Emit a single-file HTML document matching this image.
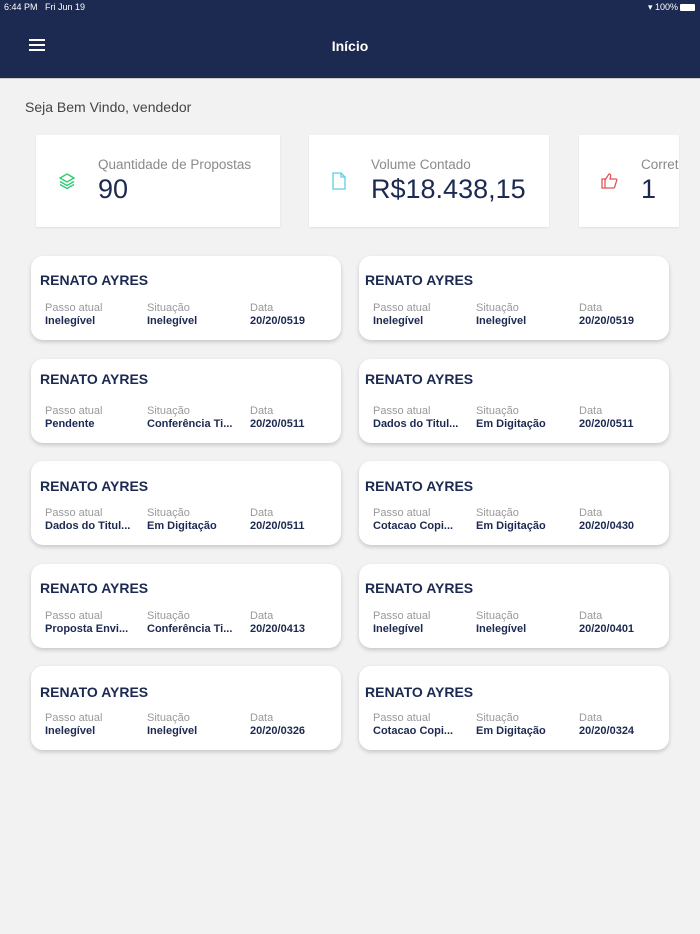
<!DOCTYPE html>
<html><head><meta charset="utf-8"><style>
*{margin:0;padding:0;box-sizing:border-box}
body{width:700px;height:934px;background:#f2f2f2;font-family:"Liberation Sans",sans-serif;position:relative;overflow:hidden}
.hdr{position:absolute;left:0;top:0;width:700px;height:78px;background:#1c2951;color:#fff}
.abs{position:absolute}
.stat{position:absolute;top:135px;height:92px;background:#fff;box-shadow:0 1px 2px rgba(0,0,0,.08)}
.stat .l{position:absolute;left:62px;top:22px;font-size:13.5px;color:#8a8a8a;white-space:nowrap}
.stat .v{position:absolute;left:62px;top:39px;font-size:27px;color:#1c2951;white-space:nowrap}
.card{position:absolute;width:310px;height:84px;background:#fff;border-radius:12px;box-shadow:0 2px 4px rgba(0,0,0,.18)}
.card .t{position:absolute;left:9px;top:16px;font-size:14px;color:#1c2951;font-weight:bold}
.card .c{position:absolute;top:46px;font-size:11px;color:#999;line-height:13px}
.card .c b{display:block;color:#1c2951;font-weight:bold;font-size:11px}
</style></head><body>
<div class="hdr">
<div class="abs" style="left:4px;top:2px;font-size:9px">6:44 PM&nbsp;&nbsp; Fri Jun 19</div>
<div class="abs" style="right:22px;top:2px;font-size:9px">&#9662; 100%</div>
<div class="abs" style="right:5px;top:4px;width:15px;height:7px;background:#fff;border-radius:1px"></div>
<div class="abs" style="left:29px;top:39px;width:16px;height:2px;background:#fff;box-shadow:0 5px 0 #fff,0 10px 0 #fff"></div>
<div class="abs" style="left:0;width:700px;top:38px;text-align:center;font-size:14px;font-weight:bold">Início</div>
</div>
<div class="abs" style="left:0;top:78px;width:700px;height:1px;background:#ccc"></div>
<div class="abs" style="left:25px;top:99px;font-size:14px;color:#444">Seja Bem Vindo, vendedor</div>

<div class="stat" style="left:36px;width:244px">
<svg class="abs" style="left:22px;top:37px" width="18" height="18" viewBox="0 0 18 18" fill="none" stroke="#2ecc71" stroke-width="1.4"><path d="M9 2L16 6 9 10 2 6Z"/><path d="M2 9.5L9 13.5 16 9.5"/><path d="M2 12.5L9 16.5 16 12.5"/></svg>
<div class="l">Quantidade de Propostas</div><div class="v">90</div></div>
<div class="stat" style="left:309px;width:240px">
<svg class="abs" style="left:22px;top:37px" width="16" height="18" viewBox="0 0 16 18" fill="none" stroke="#5bd0e6" stroke-width="1.3"><path d="M2 1H10L14 5V17H2Z"/><path d="M10 1V5H14"/></svg>
<div class="l">Volume Contado</div><div class="v">R$18.438,15</div></div>
<div class="stat" style="left:579px;width:100px;overflow:hidden">
<svg class="abs" style="left:22px;top:37px" width="17" height="17" viewBox="0 0 17 17" fill="none" stroke="#e05555" stroke-width="1.3"><path d="M1 7H4V16H1Z"/><path d="M4 8L8 2C9.5 2 10 3 9.5 5L9 7H15C16 7 16 8.5 15.5 9L13.5 15.5C13 16 12.5 16 12 16H4"/></svg>
<div class="l">Corretores</div><div class="v">1</div></div>

<div class="card" style="left:31px;top:256px"><div class="t">RENATO AYRES</div><div class="c" style="left:14px">Passo atual<b>Inelegível</b></div><div class="c" style="left:116px">Situação<b>Inelegível</b></div><div class="c" style="left:219px">Data<b>20/20/0519</b></div></div>
<div class="card" style="left:359px;top:256px"><div class="t" style="left:6px">RENATO AYRES</div><div class="c" style="left:14px">Passo atual<b>Inelegível</b></div><div class="c" style="left:117px">Situação<b>Inelegível</b></div><div class="c" style="left:220px">Data<b>20/20/0519</b></div></div>

<div class="card" style="left:31px;top:359px"><div class="t" style="top:12px">RENATO AYRES</div><div class="c" style="left:14px">Passo atual<b>Pendente</b></div><div class="c" style="left:116px">Situação<b>Conferência Ti...</b></div><div class="c" style="left:219px">Data<b>20/20/0511</b></div></div>
<div class="card" style="left:359px;top:359px"><div class="t" style="left:6px;top:12px">RENATO AYRES</div><div class="c" style="left:14px">Passo atual<b>Dados do Titul...</b></div><div class="c" style="left:117px">Situação<b>Em Digitação</b></div><div class="c" style="left:220px">Data<b>20/20/0511</b></div></div>

<div class="card" style="left:31px;top:461px"><div class="t" style="top:17px">RENATO AYRES</div><div class="c" style="left:14px">Passo atual<b>Dados do Titul...</b></div><div class="c" style="left:116px">Situação<b>Em Digitação</b></div><div class="c" style="left:219px">Data<b>20/20/0511</b></div></div>
<div class="card" style="left:359px;top:461px"><div class="t" style="left:6px;top:17px">RENATO AYRES</div><div class="c" style="left:14px">Passo atual<b>Cotacao Copi...</b></div><div class="c" style="left:117px">Situação<b>Em Digitação</b></div><div class="c" style="left:220px">Data<b>20/20/0430</b></div></div>

<div class="card" style="left:31px;top:564px"><div class="t" style="top:16px">RENATO AYRES</div><div class="c" style="left:14px">Passo atual<b>Proposta Envi...</b></div><div class="c" style="left:116px">Situação<b>Conferência Ti...</b></div><div class="c" style="left:219px">Data<b>20/20/0413</b></div></div>
<div class="card" style="left:359px;top:564px"><div class="t" style="left:6px;top:16px">RENATO AYRES</div><div class="c" style="left:14px">Passo atual<b>Inelegível</b></div><div class="c" style="left:117px">Situação<b>Inelegível</b></div><div class="c" style="left:220px">Data<b>20/20/0401</b></div></div>

<div class="card" style="left:31px;top:666px"><div class="t" style="top:18px">RENATO AYRES</div><div class="c" style="left:14px;top:46px">Passo atual<b>Inelegível</b></div><div class="c" style="left:116px;top:46px">Situação<b>Inelegível</b></div><div class="c" style="left:219px;top:46px">Data<b>20/20/0326</b></div></div>
<div class="card" style="left:359px;top:666px"><div class="t" style="left:6px;top:18px">RENATO AYRES</div><div class="c" style="left:14px;top:46px">Passo atual<b>Cotacao Copi...</b></div><div class="c" style="left:117px;top:46px">Situação<b>Em Digitação</b></div><div class="c" style="left:220px;top:46px">Data<b>20/20/0324</b></div></div>
</body></html>
